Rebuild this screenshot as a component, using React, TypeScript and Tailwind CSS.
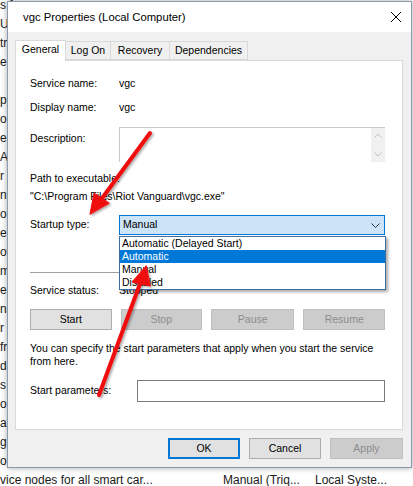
import React from 'react';

const bgRows = [
  's f', 'Up', 'tr', 'er', '', 'pa', 'or', 'er', 'A', 'r t', 'nf', 'or', 'er',
  'ov', 'm', 'er', 'ns', 'r', 'fr', 'd', 's', 'o', 'ac', 'g', 'o l',
];

const Btn: React.FC<{ label: string; disabled?: boolean; w: string; focus?: boolean }> = ({ label, disabled, w, focus }) => (
  <div
    className={`flex h-[21px] items-center justify-center ${w} ${
      disabled
        ? 'border border-[#bfbfbf] bg-[#cccccc] text-[#8c8c8c]'
        : focus
        ? 'border-2 border-[#0078d7] bg-[#e1e1e1] text-black'
        : 'border border-[#adadad] bg-[#e1e1e1] text-black'
    }`}
  >
    {label}
  </div>
);

export default function App() {
  return (
    <div
      className="relative h-[486px] w-[413px] overflow-hidden bg-white text-[10.5px] text-black"
      style={{ fontFamily: '"Liberation Sans", Arial, sans-serif' }}
    >
      {/* services list behind the dialog */}
      <div className="-mt-[4px] flex flex-col text-[12px] leading-[19px] text-[#1a1a1a]">
        {bgRows.map((t, i) => (
          <div key={i} className="h-[19px] whitespace-nowrap">{t || '\u00a0'}</div>
        ))}
        <div className="flex h-[19px] whitespace-nowrap">
          <span className="w-[223px]">vice nodes for all smart car...</span>
          <span className="w-[92px]">Manual (Triq...</span>
          <span>Local Syste...</span>
        </div>
      </div>

      {/* dialog window */}
      <div className="absolute left-[7px] top-[1px] flex h-[467px] w-[405px] flex-col border border-[#8a9bb0] bg-[#f0f0f0] shadow-[0_0_6px_rgba(0,0,0,0.35)]">
        <div className="flex h-[30px] items-center justify-between bg-white pl-[15px] pr-[8px]">
          <span className="text-[11.3px]">vgc Properties (Local Computer)</span>
          <svg width="12" height="12" viewBox="0 0 12 12" className="mr-[1px]">
            <path d="M1 1 L11 11 M11 1 L1 11" stroke="#000" strokeWidth="1" />
          </svg>
        </div>

        <div className="ml-[7px] mr-[8px] mt-[7px] flex flex-col">
          <div className="flex h-[21px] items-end">
            <div className="relative z-10 -mb-px flex h-[21px] w-[51px] items-center justify-center border border-b-0 border-[#d9d9d9] bg-white pb-[2px]">
              General
            </div>
            <div className="flex h-[19px] w-[45px] items-center justify-center border border-l-0 border-[#d9d9d9]">Log On</div>
            <div className="flex h-[19px] w-[59px] items-center justify-center border border-l-0 border-[#d9d9d9]">Recovery</div>
            <div className="flex h-[19px] w-[78px] items-center justify-center border border-l-0 border-[#d9d9d9]">Dependencies</div>
          </div>

          <div className="relative flex h-[370px] flex-col border border-[#d9d9d9] bg-white pl-[14px] pr-[17px]">
            <div className="mt-[15px] flex h-[16px] items-center">
              <span className="w-[89px]">Service name:</span>
              <span>vgc</span>
            </div>
            <div className="mt-[8px] flex h-[16px] items-center">
              <span className="w-[89px]">Display name:</span>
              <span>vgc</span>
            </div>
            <div className="mt-[11px] flex h-[35px]">
              <span className="w-[89px] pt-[4px]">Description:</span>
              <div className="flex flex-1 border border-[#c8c8c8] border-r-0 border-b-0">
                <div className="flex-1" />
                <div className="flex w-[14px] flex-col items-center justify-between bg-[#f0f0f0] py-[5px]">
                  <svg width="8" height="5" viewBox="0 0 8 5"><path d="M0.5 4.5 L4 1 L7.5 4.5" fill="none" stroke="#c0c0c0" /></svg>
                  <svg width="8" height="5" viewBox="0 0 8 5"><path d="M0.5 0.5 L4 4 L7.5 0.5" fill="none" stroke="#c0c0c0" /></svg>
                </div>
              </div>
            </div>
            <div className="mt-[9px] flex h-[16px] items-center">Path to executable:</div>
            <div className="mt-[2px] flex h-[16px] items-center">"C:\Program Files\Riot Vanguard\vgc.exe"</div>
            <div className="relative mt-[10px] flex h-[20px] items-center">
              <span className="w-[89px]">Startup type:</span>
              <div className="flex h-[20px] flex-1 items-center justify-between border border-[#0078d7] bg-[#cce4f7] pl-[3px] pr-[4px]">
                <span>Manual</span>
                <svg width="9" height="5" viewBox="0 0 9 5"><path d="M0.5 0.5 L4.5 4.5 L8.5 0.5" fill="none" stroke="#333" /></svg>
              </div>
              <div className="absolute left-[89px] right-[-1px] top-[21px] z-20 flex flex-col border border-[#3c6fa0] bg-white shadow-[2px_2px_3px_rgba(0,0,0,0.35)]">
                <div className="flex h-[13px] items-center pl-[2px]">Automatic (Delayed Start)</div>
                <div className="flex h-[13px] items-center bg-[#0078d7] pl-[2px] text-white">Automatic</div>
                <div className="flex h-[13px] items-center pl-[2px]">Manual</div>
                <div className="flex h-[13px] items-center pl-[2px]">Disabled</div>
              </div>
            </div>
            <div className="mt-[37px] h-px bg-[#a0a0a0]" />
            <div className="mt-[10px] flex h-[16px] items-center">
              <span className="w-[89px]">Service status:</span>
              <span>Stopped</span>
            </div>
            <div className="mt-[10px] flex gap-[9px]">
              <Btn label="Start" w="w-[82px]" />
              <Btn label="Stop" w="w-[82px]" disabled />
              <Btn label="Pause" w="w-[84px]" disabled />
              <Btn label="Resume" w="w-[82px]" disabled />
            </div>
            <div className="mt-[12px] whitespace-nowrap leading-[13px]">
              You can specify the start parameters that apply when you start the service
              <br />
              from here.
            </div>
            <div className="mt-[12px] flex h-[22px] items-center">
              <span className="w-[107px]">Start parameters:</span>
              <div className="h-[22px] flex-1 border border-[#7a7a7a]" />
            </div>
          </div>

          <div className="mt-[8px] flex justify-end gap-[9px]">
            <Btn label="OK" w="w-[72px]" focus />
            <Btn label="Cancel" w="w-[72px]" />
            <Btn label="Apply" w="w-[73px]" disabled />
          </div>
        </div>
      </div>

      {/* red annotation arrows */}
      <svg className="pointer-events-none absolute left-0 top-0 z-30" width="413" height="486">
        <defs>
          <filter id="sh" x="-20%" y="-20%" width="140%" height="140%">
            <feDropShadow dx="1.5" dy="1.5" stdDeviation="1.2" floodColor="#000" floodOpacity="0.35" />
          </filter>
        </defs>
        <g filter="url(#sh)" fill="#f01010" stroke="#f01010" strokeLinecap="round" strokeLinejoin="round">
          <line x1="150" y1="133" x2="100" y2="201" strokeWidth="4" />
          <polygon points="90,214 94,193 109,203" strokeWidth="1" />
          <line x1="99" y1="395" x2="141" y2="281" strokeWidth="4" />
          <polygon points="146,266 132,282 150,286" strokeWidth="1" />
        </g>
      </svg>
    </div>
  );
}
